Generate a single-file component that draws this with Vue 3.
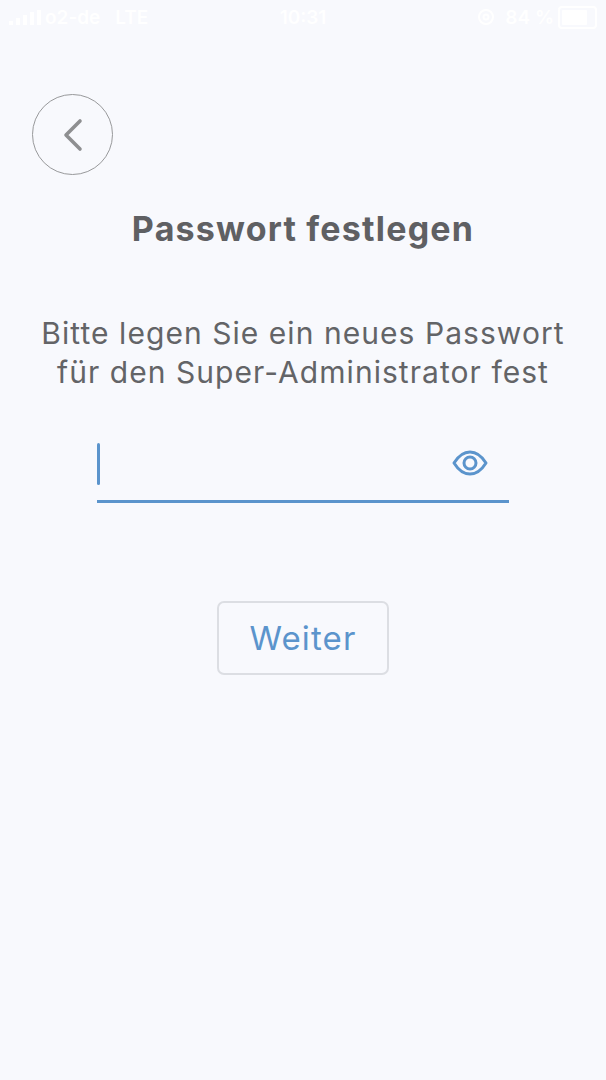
<script setup>
const signalBars = [4, 7, 10, 13, 15]
</script>

<template>
  <div class="screen">
    <div class="status">
      <div class="status-left">
        <span class="bars">
          <i v-for="h in signalBars" :key="h" class="bar" :style="{ height: h + 'px' }"></i>
        </span>
        <span>o2-de</span>
        <span class="lte">LTE</span>
      </div>
      <div class="status-time">10:31</div>
      <div class="status-right">
        <svg width="18" height="18" viewBox="0 0 18 18" fill="none" stroke="#fff" stroke-width="2">
          <circle cx="9" cy="9" r="7" />
          <circle cx="9" cy="9" r="2.5" />
        </svg>
        <span class="percent">84 %</span>
        <span class="battery"><i class="battery-fill"></i></span>
      </div>
    </div>

    <button class="back" type="button" aria-label="Zurück">
      <svg width="24" height="34" viewBox="0 0 24 34" fill="none" stroke="#8e8f91" stroke-width="3.6" stroke-linecap="round" stroke-linejoin="round">
        <path d="M19 3 L5 17 L19 31" />
      </svg>
    </button>

    <h1 class="title">Passwort festlegen</h1>
    <p class="text">Bitte legen Sie ein neues Passwort<br />für den Super-Administrator fest</p>

    <div class="field">
      <span class="caret"></span>
      <svg width="36" height="26" viewBox="0 0 36 26" fill="none" stroke="#5b94cc" stroke-width="3">
        <path d="M2 13 C7 5 12 2 18 2 C24 2 29 5 34 13 C29 21 24 24 18 24 C12 24 7 21 2 13 Z" stroke-linejoin="round" />
        <circle cx="18" cy="13" r="6" />
      </svg>
    </div>

    <button class="next" type="button">Weiter</button>
  </div>
</template>

<style>
html, body { margin: 0; background: #f8f9fd; }
</style>

<style scoped>
.screen {
  width: 606px;
  height: 1080px;
  overflow: hidden;
  background: #f8f9fd;
  display: flex;
  flex-direction: column;
  font-family: Inter, "Liberation Sans", sans-serif;
  color: #5d5e61;
}
.status {
  height: 34px;
  display: grid;
  grid-template-columns: 1fr auto 1fr;
  align-items: center;
  padding: 0 9px;
  color: #fff;
  font-size: 19px;
  font-weight: 600;
}
.status-left { display: flex; align-items: center; gap: 15px; }
.bars { display: flex; align-items: flex-end; gap: 3px; margin-right: -12px; width: 33px; }
.bar { width: 4px; background: #fff; display: block; flex-shrink: 0; }
.status-time { text-align: center; }
.status-right { display: flex; align-items: center; justify-content: flex-end; gap: 10px; }
.percent { margin-right: -6px; }
.battery {
  width: 31px;
  height: 15px;
  border: 2px solid #fff;
  border-radius: 4px;
  padding: 2px;
  display: flex;
}
.battery-fill { width: 80%; background: #fff; border-radius: 1px; display: block; }
.back {
  width: 81px;
  height: 81px;
  margin: 60px 0 0 32px;
  padding: 0;
  border: 1.8px solid #98999b;
  border-radius: 50%;
  background: transparent;
  display: flex;
  align-items: center;
  justify-content: center;
}
.title {
  margin: 34px 0 0;
  text-align: center;
  font-size: 34px;
  line-height: 40px;
  font-weight: 700;
  letter-spacing: 1.2px;
  color: #5f6063;
}
.text {
  margin: 65px 0 0;
  text-align: center;
  font-size: 30px;
  line-height: 39px;
  font-weight: 400;
  letter-spacing: 1.05px;
  color: #636467;
}
.field {
  width: 412px;
  height: 62px;
  margin: 46px auto 0;
  border-bottom: 3px solid #5b94cc;
  display: flex;
  align-items: center;
  justify-content: space-between;
}
.field svg { margin-right: 21px; margin-top: -12px; }
.caret {
  width: 3px;
  height: 42px;
  margin-top: -10px;
  background: #5b94cc;
  border-radius: 2px;
}
.next {
  width: 172px;
  height: 74px;
  margin: 98px auto 0;
  border: 2px solid #dcdee3;
  border-radius: 7px;
  background: transparent;
  color: #5b94cc;
  font-family: inherit;
  font-size: 33px;
  font-weight: 400;
  letter-spacing: 1.1px;
}
</style>
